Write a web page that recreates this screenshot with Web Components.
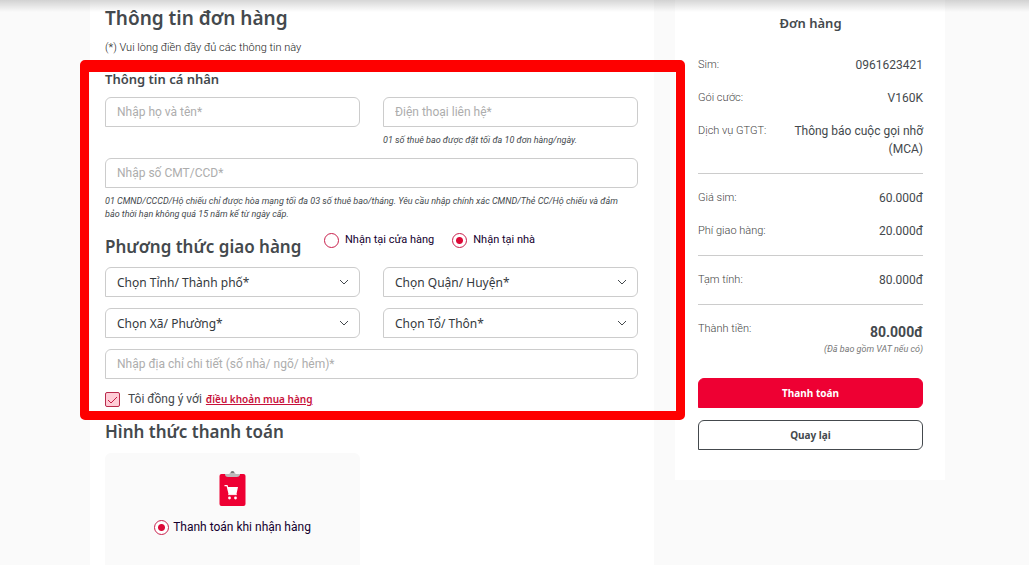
<!DOCTYPE html>
<html lang="vi">
<head>
  <meta charset="UTF-8">
  <meta name="viewport" content="width=device-width, initial-scale=1.0">
  <title>Thông tin đơn hàng</title>
  <style>
    body {
      margin: 0;
      background: #fafafa;
      color: #44494d;
      font-family: Roboto, "Noto Sans", sans-serif;
      --brand: #ee0033;
      --line: #cccccc;
      --heading-font: "Noto Sans", "Open Sans", sans-serif;
    }
  </style>
</head>
<body>
  <checkout-page></checkout-page>

  <script>
    class BaseElement extends HTMLElement {
      connectedCallback() {
        if (this.shadowRoot) return;
        this.attachShadow({ mode: "open" });
        const template = document.createElement("template");
        template.innerHTML = `
          <style>
            * { box-sizing: border-box; margin: 0; }
            ${this.getStyles()}
          </style>
          ${this.getTemplate()}
        `;
        this.shadowRoot.appendChild(template.content.cloneNode(true));
      }
    }

    class FormField extends BaseElement {
      getTemplate() {
        const label = this.getAttribute("label");
        return `
          <input type="text" placeholder="${label}" aria-label="${label}">
          <slot></slot>
        `;
      }
      getStyles() {
        return `
          :host {
            display: block;
            font-size: 9px;
            font-style: italic;
            line-height: 13px;
          }
          input {
            display: block;
            width: 100%;
            height: 30px;
            padding: 0 11px;
            border: 1px solid var(--line);
            border-radius: 6px 6px 6px 0;
            background: #fff;
            color: inherit;
            font: 12px/18px Roboto, sans-serif;
          }
          input::placeholder { color: #adadad; }
          ::slotted(p) { padding: 7px 15px 0 0; }
        `;
      }
    }

    class SelectField extends BaseElement {
      getTemplate() {
        const label = this.getAttribute("label");
        return `
          <select aria-label="${label}"><option>${label}</option></select>
          <svg viewBox="0 0 10 6" width="10" height="6"><path d="M1 1l4 4 4-4" fill="none" stroke="#44494d"/></svg>
        `;
      }
      getStyles() {
        return `
          :host { display: grid; align-items: center; }
          select, svg { grid-area: 1 / 1; }
          select {
            appearance: none;
            width: 100%;
            height: 30px;
            padding: 2px 30px 0 11px;
            border: 1px solid var(--line);
            border-radius: 6px 6px 6px 0;
            background: #fff;
            color: #34393d;
            font: 400 12px/18px var(--heading-font);
          }
          svg { justify-self: end; margin-right: 11px; pointer-events: none; }
        `;
      }
    }

    class RadioOption extends BaseElement {
      getTemplate() {
        return `
          <label>
            <input type="radio" ${this.hasAttribute("checked") ? "checked" : ""}>
            <span><slot></slot></span>
          </label>
        `;
      }
      getStyles() {
        return `
          :host { display: block; color: #14002e; font-size: 11px; line-height: 16px; }
          label { display: flex; align-items: center; gap: var(--radio-gap, 6px); white-space: nowrap; }
          input {
            appearance: none;
            flex: none;
            width: 15px;
            height: 15px;
            border: 1px solid #c9204c;
            border-radius: 50%;
            background: #fff;
          }
          input:checked { background: radial-gradient(circle, #dc0a38 0 3px, #fff 4px); }
        `;
      }
    }

    class TermsCheck extends BaseElement {
      getTemplate() {
        return `
          <span class="box">
            <input type="checkbox" id="agree" checked>
            <svg viewBox="0 0 15 15" width="15" height="15"><path d="M3 8l3 3 6-6" fill="none" stroke="#c41c45"/></svg>
          </span>
          <label for="agree">Tôi đồng ý với</label>
          <a href="#">điều khoản mua hàng</a>
        `;
      }
      getStyles() {
        return `
          :host { display: flex; align-items: center; font-size: 12px; line-height: 16px; }
          .box { display: grid; margin-right: 8px; }
          input, svg { grid-area: 1 / 1; }
          svg { pointer-events: none; }
          input {
            appearance: none;
            width: 15px;
            height: 15px;
            border: 1px solid #b92a4c;
            border-radius: 2px;
            background: #ffccd6;
          }
          label { margin-right: 4px; }
          a { color: #c8103a; font: 600 10px/16px var(--heading-font); }
        `;
      }
    }

    class OrderRow extends BaseElement {
      getTemplate() {
        return `
          <span class="label">${this.getAttribute("label")}</span>
          <span class="value"><slot></slot></span>
        `;
      }
      getStyles() {
        return `
          :host { display: flex; justify-content: space-between; gap: 24px; line-height: 18px; }
          .label { flex: none; color: #444; font-size: 11px; font-weight: 300; }
          .value { text-align: right; font-size: 12px; }
          :host([total]) .value { padding-top: 3px; font: 700 14px/18px Roboto, sans-serif; }
        `;
      }
    }

    class ActionButton extends BaseElement {
      getTemplate() {
        return `<button type="button"><slot></slot></button>`;
      }
      getStyles() {
        return `
          :host { display: block; }
          button {
            display: block;
            width: 100%;
            height: 30px;
            border: 1px solid #44494d;
            border-radius: 6px 6px 6px 0;
            background: #fff;
            color: #44494d;
            font: 700 10px/16px var(--heading-font);
          }
          :host([primary]) button {
            border-color: var(--brand);
            background: var(--brand);
            color: #fff;
          }
        `;
      }
    }

    class PaymentCard extends BaseElement {
      getTemplate() {
        return `
          <svg viewBox="0 0 27 37" width="27" height="37">
            <rect x="0.5" y="4" width="26" height="32" rx="2" fill="#ee0033"/>
            <path d="M6 4h4q1-1 2-1.500a1.800 1.800 0 0 1 3 0q1 .5 2 1.500h4v1q-1 2-3 2H9q-3 0-3-3z" fill="#bdb9ba"/>
            <path d="M11.500 3a2 2 0 0 1 4 0z" fill="#777"/>
            <path d="M5.500 15h3l.6 2H19l-1.500 7H9.500L7.600 16.200H5.500z" fill="#fff"/>
            <path d="M9.200 24.600h8.600" stroke="#fff" stroke-width="1"/>
            <circle cx="10.500" cy="28" r="1.400" fill="#fff"/>
            <circle cx="16.500" cy="28" r="1.400" fill="#fff"/>
          </svg>
          <radio-option checked><slot></slot></radio-option>
        `;
      }
      getStyles() {
        return `
          :host {
            display: flex;
            flex-direction: column;
            align-items: center;
            gap: 12px;
            padding: 17px 0 16px;
            border-radius: 6px 6px 0 0;
            background: #fafafa;
          }
          radio-option { --radio-gap: 4px; font-size: 12px; }
        `;
      }
    }

    // red frame drawn round whatever is slotted in
    class HighlightFrame extends BaseElement {
      getTemplate() {
        return `<slot></slot><div class="frame"></div>`;
      }
      getStyles() {
        return `
          :host { display: block; position: relative; }
          .frame {
            position: absolute;
            inset: -10px -47px -13px -25px;
            border: 9px solid #fe0000;
            border-top-width: 12px;
            border-radius: 5px;
            pointer-events: none;
          }
        `;
      }
    }

    class OrderSummary extends BaseElement {
      getTemplate() {
        return `
          <h2>Đơn hàng</h2>
          <section>
            <order-row label="Sim:">0961623421</order-row>
            <order-row label="Gói cước:">V160K</order-row>
            <order-row label="Dịch vụ GTGT:">Thông báo cuộc gọi nhỡ (MCA)</order-row>
          </section>
          <section>
            <order-row label="Giá sim:">60.000đ</order-row>
            <order-row label="Phí giao hàng:">20.000đ</order-row>
          </section>
          <section>
            <order-row label="Tạm tính:">80.000đ</order-row>
          </section>
          <section class="total">
            <order-row label="Thành tiền:" total>80.000đ</order-row>
            <p>(Đã bao gồm VAT nếu có)</p>
          </section>
          <div class="actions">
            <action-button primary>Thanh toán</action-button>
            <action-button>Quay lại</action-button>
          </div>
        `;
      }
      getStyles() {
        return `
          :host { display: block; padding: 14px 22px 30px 23px; background: #fff; }
          h2 { text-align: center; font: 600 13px/18px var(--heading-font); }
          section {
            display: flex;
            flex-direction: column;
            gap: 15px;
            padding: 15px 0;
            border-top: 1px solid var(--line);
          }
          h2 + section { padding-top: 24px; border-top: 0; }
          .total { gap: 0; padding-bottom: 21px; }
          p { color: #777; text-align: right; font-size: 9px; font-style: italic; line-height: 16px; }
          .actions { display: grid; gap: 12px; }
        `;
      }
    }

    class CheckoutForm extends BaseElement {
      getTemplate() {
        return `
          <h2 class="title">Thông tin đơn hàng</h2>
          <p class="hint">(*) Vui lòng điền đầy đủ các thông tin này</p>
          <highlight-frame>
            <h3>Thông tin cá nhân</h3>
            <div class="fields">
              <form-field label="Nhập họ và tên*"></form-field>
              <form-field label="Điện thoại liên hệ*">
                <p>01 số thuê bao được đặt tối đa 10 đơn hàng/ngày.</p>
              </form-field>
              <form-field class="wide" label="Nhập số CMT/CCD*">
                <p>01 CMND/CCCD/Hộ chiếu chỉ được hòa mạng tối đa 03 số thuê bao/tháng. Yêu cầu nhập chính xác CMND/Thẻ CC/Hộ chiếu và đảm bảo thời hạn không quá 15 năm kể từ ngày cấp.</p>
              </form-field>
            </div>
            <div class="delivery">
              <h2>Phương thức giao hàng</h2>
              <radio-option>Nhận tại cửa hàng</radio-option>
              <radio-option checked>Nhận tại nhà</radio-option>
            </div>
            <div class="fields">
              <select-field label="Chọn Tỉnh/ Thành phố*"></select-field>
              <select-field label="Chọn Quận/ Huyện*"></select-field>
              <select-field label="Chọn Xã/ Phường*"></select-field>
              <select-field label="Chọn Tổ/ Thôn*"></select-field>
              <form-field class="wide" label="Nhập địa chỉ chi tiết (số nhà/ ngõ/ hẻm)*"></form-field>
            </div>
            <terms-check></terms-check>
          </highlight-frame>
          <h2 class="payment">Hình thức thanh toán</h2>
          <div class="fields">
            <payment-card>Thanh toán khi nhận hàng</payment-card>
          </div>
        `;
      }
      getStyles() {
        return `
          :host { display: grid; align-content: start; padding: 6px 16px 0 15px; background: #fff; }
          h2 { font: 600 17px/24px var(--heading-font); }
          h3 { margin-bottom: 9px; font: 600 13px/18px var(--heading-font); }
          .title { font-size: 19px; }
          .hint { margin: 10px 0 14px; font-size: 11px; font-weight: 300; line-height: 16px; color: #222; }
          .fields { display: grid; grid-template-columns: 1fr 1fr; gap: 11px 23px; }
          .wide { grid-column: 1 / -1; }
          .delivery { display: flex; align-items: flex-start; gap: 18px; margin: 11px 0 8px; }
          .delivery h2 { flex: 0 0 201px; padding-top: 3px; white-space: nowrap; }
          terms-check { margin-top: 12px; }
          .payment { margin: 13px 0 9px; }
          payment-card { min-height: 112px; }
        `;
      }
    }

    class CheckoutPage extends BaseElement {
      getTemplate() {
        return `
          <main>
            <checkout-form></checkout-form>
            <order-summary></order-summary>
          </main>
          <div class="header-shadow"></div>
        `;
      }
      getStyles() {
        return `
          :host { display: block; position: relative; }
          main {
            display: grid;
            grid-template-columns: minmax(0, 1fr) 270px;
            gap: 21px;
            align-items: start;
            margin: 0 84px 0 90px;
          }
          checkout-form { min-height: 100vh; }
          .header-shadow {
            position: absolute;
            inset: 0 0 auto;
            height: 12px;
            background: linear-gradient(rgba(0, 0, 0, 0.16), rgba(0, 0, 0, 0));
            pointer-events: none;
          }
        `;
      }
    }

    customElements.define("form-field", FormField);
    customElements.define("select-field", SelectField);
    customElements.define("radio-option", RadioOption);
    customElements.define("terms-check", TermsCheck);
    customElements.define("order-row", OrderRow);
    customElements.define("action-button", ActionButton);
    customElements.define("payment-card", PaymentCard);
    customElements.define("highlight-frame", HighlightFrame);
    customElements.define("order-summary", OrderSummary);
    customElements.define("checkout-form", CheckoutForm);
    customElements.define("checkout-page", CheckoutPage);
  </script>
</body>
</html>
